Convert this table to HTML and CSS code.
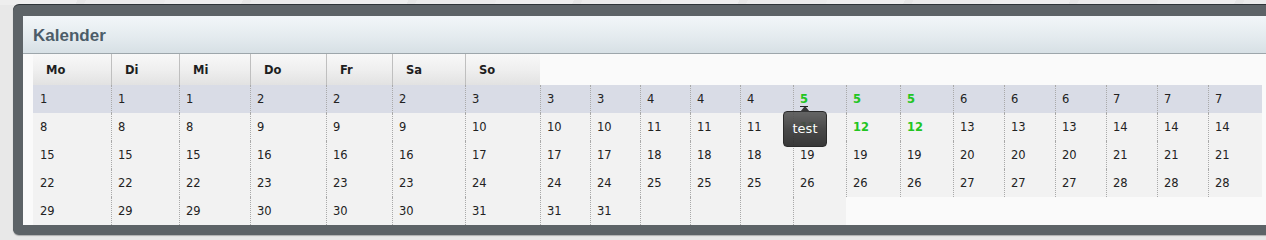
FILE: index.html
```html
<!DOCTYPE html>
<html lang="de">
<head>
<meta charset="utf-8">
<title>Kalender</title>
<link rel="stylesheet" href="styles.css">
</head>
<body>
<div class="panel">
  <div class="titlebar">
    <h2 class="title">Kalender</h2>
    <button class="minimize" type="button" aria-label="Minimieren"><span class="bar"></span></button>
  </div>
  <div class="content">
    <table class="cal">
      <colgroup>
        <col style="width:78px"><col style="width:68px"><col style="width:71px"><col style="width:76px"><col style="width:66px"><col style="width:73px"><col style="width:75px">
        <col style="width:50px"><col style="width:50px"><col style="width:50px"><col style="width:50px"><col style="width:53px"><col style="width:53px"><col style="width:54px">
        <col style="width:53px"><col style="width:51px"><col style="width:51px"><col style="width:51px"><col style="width:51px"><col style="width:51px"><col style="width:54px">
      </colgroup>
      <thead>
        <tr class="head">
          <th>Mo</th><th>Di</th><th>Mi</th><th>Do</th><th>Fr</th><th>Sa</th><th>So</th>
        </tr>
      </thead>
      <tbody>
        <tr class="first">
          <td>1</td><td>1</td><td>1</td><td>2</td><td>2</td><td>2</td><td>3</td><td>3</td><td>3</td><td>4</td><td>4</td><td>4</td>
          <td class="mark tip-cell"><span class="u">5</span>
            <div class="tooltip">test</div>
          </td>
          <td class="mark">5</td><td class="mark">5</td><td>6</td><td>6</td><td>6</td><td>7</td><td>7</td><td>7</td>
        </tr>
        <tr>
          <td>8</td><td>8</td><td>8</td><td>9</td><td>9</td><td>9</td><td>10</td><td>10</td><td>10</td><td>11</td><td>11</td><td>11</td>
          <td class="mark">12</td><td class="mark">12</td><td class="mark">12</td><td>13</td><td>13</td><td>13</td><td>14</td><td>14</td><td>14</td>
        </tr>
        <tr>
          <td>15</td><td>15</td><td>15</td><td>16</td><td>16</td><td>16</td><td>17</td><td>17</td><td>17</td><td>18</td><td>18</td><td>18</td>
          <td>19</td><td>19</td><td>19</td><td>20</td><td>20</td><td>20</td><td>21</td><td>21</td><td>21</td>
        </tr>
        <tr>
          <td>22</td><td>22</td><td>22</td><td>23</td><td>23</td><td>23</td><td>24</td><td>24</td><td>24</td><td>25</td><td>25</td><td>25</td>
          <td>26</td><td>26</td><td>26</td><td>27</td><td>27</td><td>27</td><td>28</td><td>28</td><td>28</td>
        </tr>
        <tr>
          <td>29</td><td>29</td><td>29</td><td>30</td><td>30</td><td>30</td><td>31</td><td>31</td><td>31</td><td></td><td></td><td></td><td></td>
        </tr>
      </tbody>
    </table>
  </div>
</div>
</body>
</html>
```
FILE: styles.css
```css
html, body {
  margin: 0;
  padding: 0;
}

body {
  width: 1266px;
  height: 240px;
  overflow: hidden;
  background:
    repeating-linear-gradient(115deg, #eeeeee 0 70px, #e6e6e6 70px 78px, #ebebeb 78px 150px) top left / 100% 5px no-repeat,
    #e8e8e8;
  font-family: "DejaVu Sans", Verdana, sans-serif;
}

.panel {
  margin: 5px 0 0 13px;
  width: 1270px;
  border: 10px solid #5d6367;
  border-top-width: 11px;
  border-radius: 6px;
  box-shadow: 0 -1px 0 #2e3438, 0 1px 1px rgba(0,0,0,0.25);
  background: #fafafa;
}

.titlebar {
  display: flex;
  align-items: center;
  height: 37px;
  padding: 0 6px 0 10px;
  background: linear-gradient(to bottom, #f2f6f9 0%, #e3eaee 60%, #d7e0e5 100%);
  border-bottom: 1px solid #9da6ab;
}

.title {
  margin: 0;
  font-family: "Liberation Sans", Arial, sans-serif;
  font-size: 17px;
  font-weight: bold;
  color: #4c5c68;
  position: relative;
  top: 1px;
}

.minimize {
  margin-left: auto;
  width: 15px;
  height: 14px;
  padding: 0;
  border: 1px solid #737373;
  border-radius: 2px;
  background: linear-gradient(to bottom, #c2c2c2, #8f8f8f);
  display: flex;
  align-items: center;
  justify-content: center;
  margin-top: -2px;
}

.minimize .bar {
  display: block;
  width: 8px;
  height: 3px;
  background: #f4f8fb;
  box-shadow: 0 0 0 1px #7f8fa0 inset;
}

.content {
  padding: 0 0 0 10px;
  background: #fafafa;
}

.cal {
  table-layout: fixed;
  width: 1229px;
  border-collapse: separate;
  border-spacing: 0;
  font-size: 11.5px;
  color: #222;
}

.cal th,
.cal td {
  text-align: left;
  white-space: nowrap;
  vertical-align: middle;
}

.head th {
  height: 31px;
  padding: 0 0 0 13px;
  font-size: 11.5px;
  font-weight: bold;
  color: #1e1e1e;
  background: linear-gradient(to bottom, #f8f8f8 0%, #efefef 50%, #e2e2e2 100%);
  border-left: 1px solid #bfbfbf;
}

.head th:first-child {
  border-left: 0;
}

.cal td {
  height: 28px;
  padding: 0 0 0 6px;
  background: #f2f2f2;
  border-left: 1px dotted #a9a9a9;
}

.cal td:first-child {
  border-left: 0;
  padding-left: 7px;
}

.cal tr.first td {
  background: #d9dce6;
}

.cal td.mark {
  color: #22c522;
  font-weight: bold;
}

.tip-cell {
  position: relative;
}

.u {
  border-bottom: 1px solid #222;
}

.tooltip {
  position: absolute;
  left: -11px;
  top: 26px;
  width: 44px;
  height: 36px;
  box-sizing: border-box;
  border: 1px solid #1d1d1d;
  border-radius: 4px;
  background: linear-gradient(to bottom, #5b5b5b 0%, #3d3d3d 50%, #2b2b2b 100%);
  opacity: 0.93;
  color: #fff;
  font-weight: normal;
  font-size: 13px;
  line-height: 34px;
  text-align: center;
  z-index: 2;
}

.tooltip::before {
  content: "";
  position: absolute;
  left: 16px;
  top: -6px;
  border-left: 5px solid transparent;
  border-right: 5px solid transparent;
  border-bottom: 6px solid #2a2a2a;
}
```
